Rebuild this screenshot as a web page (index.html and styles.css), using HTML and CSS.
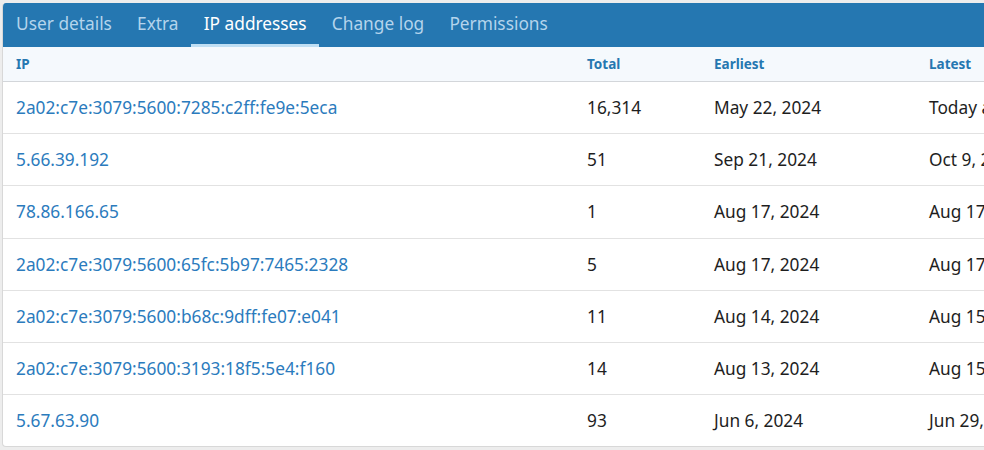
FILE: index.html
```html
<!DOCTYPE html>
<html lang="en">
<head>
    <meta charset="UTF-8">
    <title>IP addresses</title>
    <link rel="stylesheet" href="styles.css">
</head>
<body>

<div class="block">
    <div class="tabs">
        <a class="tab">User details</a>
        <a class="tab">Extra</a>
        <a class="tab active">IP addresses</a>
        <a class="tab">Change log</a>
        <a class="tab">Permissions</a>
    </div>

    <div class="ip-table">
        <div class="row head">
            <div>IP</div>
            <div>Total</div>
            <div>Earliest</div>
            <div>Latest</div>
        </div>
        <div class="row">
            <div><a href="#">2a02:c7e:3079:5600:7285:c2ff:fe9e:5eca</a></div>
            <div>16,314</div>
            <div>May 22, 2024</div>
            <div>Today at 10:12 AM</div>
        </div>
        <div class="row">
            <div><a href="#">5.66.39.192</a></div>
            <div>51</div>
            <div>Sep 21, 2024</div>
            <div>Oct 9, 2024</div>
        </div>
        <div class="row">
            <div><a href="#">78.86.166.65</a></div>
            <div>1</div>
            <div>Aug 17, 2024</div>
            <div>Aug 17, 2024</div>
        </div>
        <div class="row">
            <div><a href="#">2a02:c7e:3079:5600:65fc:5b97:7465:2328</a></div>
            <div>5</div>
            <div>Aug 17, 2024</div>
            <div>Aug 17, 2024</div>
        </div>
        <div class="row">
            <div><a href="#">2a02:c7e:3079:5600:b68c:9dff:fe07:e041</a></div>
            <div>11</div>
            <div>Aug 14, 2024</div>
            <div>Aug 15, 2024</div>
        </div>
        <div class="row">
            <div><a href="#">2a02:c7e:3079:5600:3193:18f5:5e4:f160</a></div>
            <div>14</div>
            <div>Aug 13, 2024</div>
            <div>Aug 15, 2024</div>
        </div>
        <div class="row">
            <div><a href="#">5.67.63.90</a></div>
            <div>93</div>
            <div>Jun 6, 2024</div>
            <div>Jun 29, 2024</div>
        </div>
    </div>
</div>

</body>
</html>
```

FILE: styles.css
```css
body {
    margin: 0;
    padding: 3px 0 0 2px;
    background-color: #ededed;
    font-family: "Noto Sans", "Open Sans", sans-serif;
    color: #1e1e1e;
    overflow: hidden;
}
.block {
    width: 1160px;
    background-color: #fff;
    border: 1px solid #d8d8d8;
    border-top: none;
    border-radius: 4px;
    overflow: hidden;
}
.tabs {
    display: flex;
    height: 44px;
    padding-left: 0.5px;
    background-color: #2577b1;
}
.tab {
    display: flex;
    align-items: center;
    padding: 0 12.6px;
    font-size: 17.3px;
    color: #b4d4ec;
    border-bottom: 3px solid transparent;
    cursor: pointer;
}
.tab.active {
    color: #fff;
    border-bottom-color: #bfdff4;
}
.row {
    display: grid;
    grid-template-columns: 571px 127px 215px 240px;
    height: 51.2px;
    align-items: center;
    border-bottom: 1px solid #e2e2e2;
    font-size: 17.3px;
}
.row:last-child {
    border-bottom: none;
}
.row > div {
    padding-left: 13px;
    white-space: nowrap;
}
.row a {
    color: #2b7bbd;
    text-decoration: none;
}
.row.head {
    height: 34px;
    background-color: #f5f9fd;
    border-bottom: 1px solid #d3d6da;
    font-size: 13.5px;
    font-weight: bold;
    color: #2577b1;
}
```
